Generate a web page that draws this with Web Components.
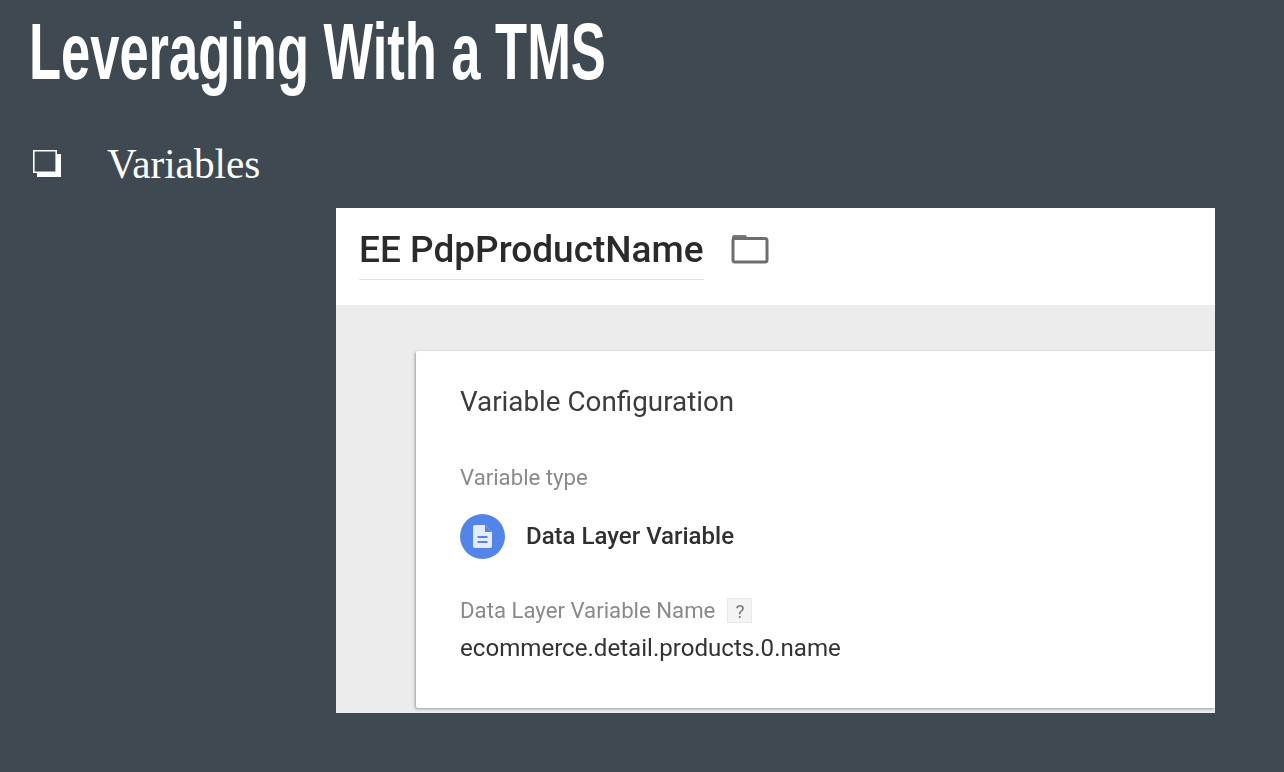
<!DOCTYPE html>
<html>
<head>
<meta charset="utf-8">
<title>Leveraging With a TMS</title>
<style>
  html, body { margin: 0; height: 100%; background: #3f4952; overflow: hidden; }
</style>
</head>
<body>
<tms-slide>
  <span slot="title">Leveraging With a TMS</span>
  <span slot="bullet">Variables</span>
  <variable-panel name="EE PdpProductName" type="Data Layer Variable" field="Data Layer Variable Name" value="ecommerce.detail.products.0.name"></variable-panel>
</tms-slide>
<script>
class TmsSlide extends HTMLElement {
  constructor() {
    super();
    this.attachShadow({ mode: 'open' }).innerHTML = `
      <style>
        :host { display: flex; flex-direction: column; width: 1284px; height: 772px; box-sizing: border-box; padding: 0 0 0 30px; color: #fff; background: #3f4952; }
        h1 { margin: 11px 0 0 -1px; height: 82px; font: 700 80px/82px "Liberation Sans", sans-serif; white-space: nowrap; transform-origin: left top; transform: scaleX(.656); }
        .bullet { display: flex; align-items: center; margin: 51px 0 0 3px; height: 40px; font: 400 41.2px/40px "Liberation Serif", serif; }
        .box { flex: none; width: 28px; height: 27px; margin: -1px 46px 0 0; }
        .holder { display: flex; justify-content: flex-start; margin: 24px 0 0 306px; }
      </style>
      <h1><slot name="title"></slot></h1>
      <div class="bullet">
        <svg class="box" viewBox="0 0 28 27"><path fill="none" stroke="#fff" stroke-width="1.6" d="M.8.8h22.400v21.400H.8z"/><path fill="#fff" d="M24 4h4v23H4v-4h20z"/></svg>
        <slot name="bullet"></slot>
      </div>
      <div class="holder"><slot></slot></div>`;
  }
}
customElements.define('tms-slide', TmsSlide);

class VariablePanel extends HTMLElement {
  constructor() {
    super();
    this.attachShadow({ mode: 'open' });
  }
  connectedCallback() {
    const a = n => this.getAttribute(n) || '';
    this.shadowRoot.innerHTML = `
      <style>
        :host { display: block; width: 879px; height: 505px; font-family: Roboto, "Liberation Sans", sans-serif; color: #2b2b2b; }
        .wrap { display: flex; flex-direction: column; width: 100%; height: 100%; background: #ececec; overflow: hidden; filter: blur(.6px); }
        header { flex: none; display: flex; align-items: flex-start; height: 97px; padding-left: 23px; background: #fff; box-sizing: border-box; }
        .name { margin-top: 21px; padding-bottom: 8px; height: 42px; line-height: 42px; font-size: 37px; font-weight: 500; color: #2a2a2a; border-bottom: 1px solid #e2e2e2; white-space: nowrap; }
        header svg { width: 38px; height: 30px; margin: 26px 0 0 27px; }
        .card { flex: none; height: 357px; margin: 46px 0 0 80px; box-sizing: border-box; padding: 33px 0 0 44px; background: #fff; border-radius: 2px 0 0 2px; box-shadow: -1px 1px 3px rgba(0,0,0,.35); }
        h2 { margin: 0; font-size: 27.8px; line-height: 36px; font-weight: 400; color: #3c3c3c; }
        .label { font-size: 22.2px; line-height: 26px; color: #8a8a8a; }
        .type-label { margin-top: 44px; }
        .type { display: flex; align-items: center; margin-top: 24px; font-size: 24px; font-weight: 500; color: #303030; }
        .type svg { width: 45px; height: 45px; margin-right: 21px; }
        .type span { margin-bottom: 2px; }
        .field { display: flex; align-items: center; margin-top: 38px; }
        .help { width: 25px; height: 25px; margin-left: 12px; text-align: center; font-size: 19px; line-height: 25px; color: #777; background: #f4f4f4; border: 1px solid #e9e9e9; box-sizing: border-box; }
        .value { margin-top: 10px; font-size: 24.1px; line-height: 30px; color: #333; }
      </style>
      <div class="wrap">
        <header>
          <div class="name">${a('name')}</div>
          <svg viewBox="0 0 38 30"><path fill="#7a7a7a" d="M2.500 1h12l3.500 4H1V2.500z"/><rect x="2" y="4.500" width="34" height="23.500" rx="2" fill="none" stroke="#6e6e6e" stroke-width="3"/></svg>
        </header>
        <section class="card">
          <h2>Variable Configuration</h2>
          <div class="label type-label">Variable type</div>
          <div class="type">
            <svg viewBox="0 0 45 45"><circle cx="22.500" cy="22.500" r="22.500" fill="#5484e8"/><path fill="#e4ecfb" d="M15 11h10l7 7v14a2 2 0 0 1-2 2H15a2 2 0 0 1-2-2V13a2 2 0 0 1 2-2z"/><path fill="#5484e8" d="M25 11v7h7zM17.500 22h10v2h-10zM17.500 27h10v2h-10z"/></svg>
            <span>${a('type')}</span>
          </div>
          <div class="field label"><span>${a('field')}</span><span class="help">?</span></div>
          <div class="value">${a('value')}</div>
        </section>
      </div>`;
  }
}
customElements.define('variable-panel', VariablePanel);
</script>
</body>
</html>
